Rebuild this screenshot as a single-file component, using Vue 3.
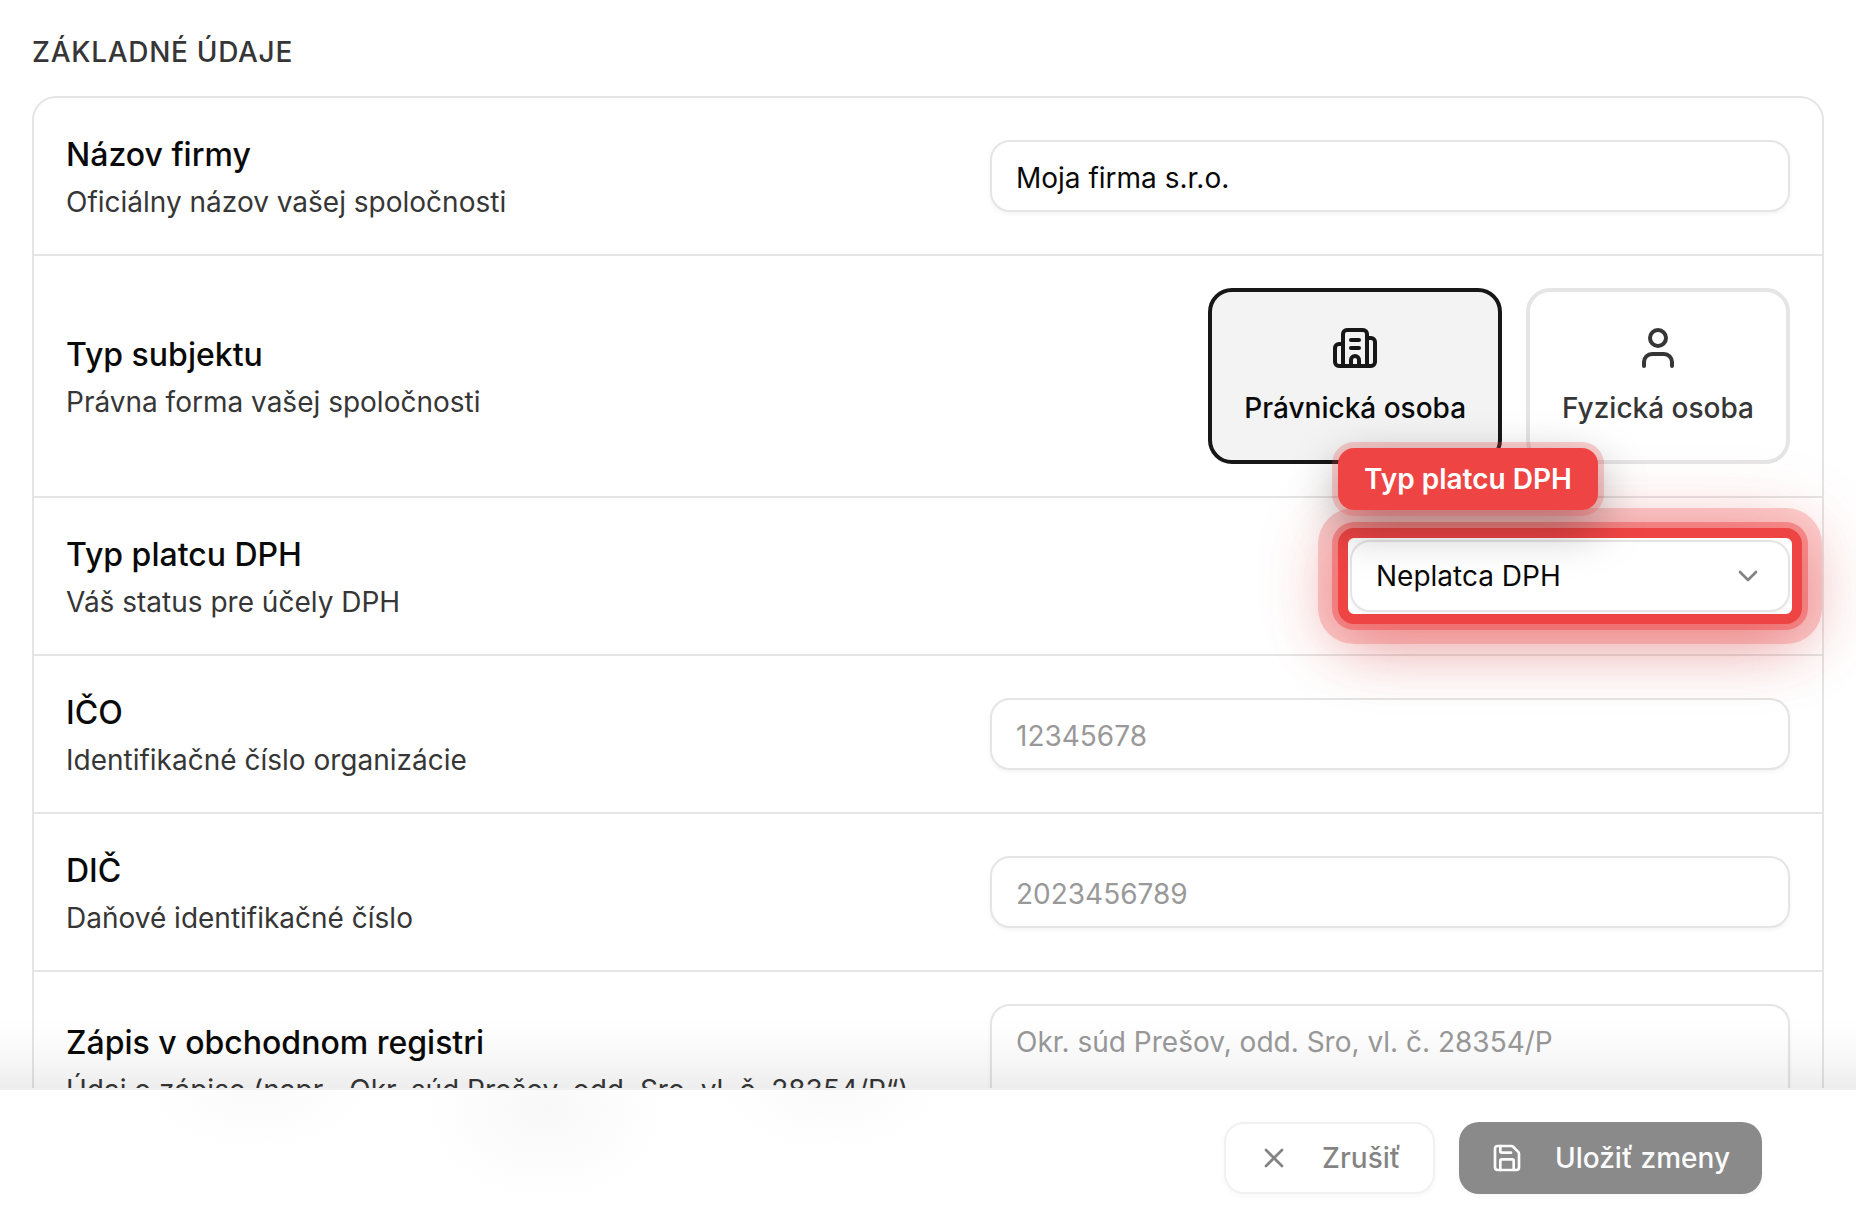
<script setup>
import { ref } from 'vue'

const companyName = ref('Moja firma s.r.o.')
const subjectType = ref('legal')
const vatPayer = ref('none')
const companyId = ref('')
const taxId = ref('')
const registry = ref('')
</script>

<template>
  <form class="page" @submit.prevent>
    <main class="content">
      <h2 class="section-title">ZÁKLADNÉ ÚDAJE</h2>

      <section class="card">
        <div class="row">
          <div class="info">
            <label class="title" for="company-name">Názov firmy</label>
            <p class="desc">Oficiálny názov vašej spoločnosti</p>
          </div>
          <input id="company-name" v-model="companyName" class="field" type="text" />
        </div>

        <div class="row">
          <div class="info">
            <span id="subject-type" class="title">Typ subjektu</span>
            <p class="desc">Právna forma vašej spoločnosti</p>
          </div>
          <div class="options" role="group" aria-labelledby="subject-type">
            <button
              type="button"
              class="option"
              :class="{ selected: subjectType === 'legal' }"
              @click="subjectType = 'legal'"
            >
              <svg class="icon-lg" viewBox="0 0 24 24" aria-hidden="true">
                <path d="M10 12h4" />
                <path d="M10 8h4" />
                <path d="M14 21v-3a2 2 0 0 0-4 0v3" />
                <path d="M6 10H4a2 2 0 0 0-2 2v7a2 2 0 0 0 2 2h16a2 2 0 0 0 2-2V9a2 2 0 0 0-2-2h-2" />
                <path d="M6 21V5a2 2 0 0 1 2-2h8a2 2 0 0 1 2 2v16" />
              </svg>
              <span>Právnická osoba</span>
            </button>
            <button
              type="button"
              class="option"
              :class="{ selected: subjectType === 'natural' }"
              @click="subjectType = 'natural'"
            >
              <svg class="icon-lg" viewBox="0 0 24 24" aria-hidden="true">
                <path d="M19 21v-2a4 4 0 0 0-4-4H9a4 4 0 0 0-4 4v2" />
                <circle cx="12" cy="7" r="4" />
              </svg>
              <span>Fyzická osoba</span>
            </button>
          </div>
        </div>

        <div class="row">
          <div class="info">
            <label class="title" for="vat-payer">Typ platcu DPH</label>
            <p class="desc">Váš status pre účely DPH</p>
          </div>
          <div class="select-wrap">
            <div class="highlight"></div>
            <select id="vat-payer" v-model="vatPayer" class="select">
              <option value="none">Neplatca DPH</option>
              <option value="payer">Platca DPH</option>
            </select>
            <svg class="icon chevron" viewBox="0 0 24 24" aria-hidden="true">
              <path d="m6 9 6 6 6-6" />
            </svg>
            <div class="callout">Typ platcu DPH</div>
          </div>
        </div>

        <div class="row">
          <div class="info">
            <label class="title" for="company-id">IČO</label>
            <p class="desc">Identifikačné číslo organizácie</p>
          </div>
          <input id="company-id" v-model="companyId" class="field" type="text" placeholder="12345678" />
        </div>

        <div class="row">
          <div class="info">
            <label class="title" for="tax-id">DIČ</label>
            <p class="desc">Daňové identifikačné číslo</p>
          </div>
          <input id="tax-id" v-model="taxId" class="field" type="text" placeholder="2023456789" />
        </div>

        <div class="row">
          <div class="info">
            <label class="title" for="registry">Zápis v obchodnom registri</label>
            <p class="desc">Údaj o zápise (napr. „Okr. súd Prešov, odd. Sro, vl. č. 28354/P“)</p>
          </div>
          <textarea
            id="registry"
            v-model="registry"
            class="field area"
            placeholder="Okr. súd Prešov, odd. Sro, vl. č. 28354/P"
          ></textarea>
        </div>
      </section>
    </main>

    <footer class="footer">
      <button type="button" class="btn cancel" disabled>
        <svg class="icon" viewBox="0 0 24 24" aria-hidden="true">
          <path d="M18 6 6 18" />
          <path d="m6 6 12 12" />
        </svg>
        <span>Zrušiť</span>
      </button>
      <button type="submit" class="btn save" disabled>
        <svg class="icon" viewBox="0 0 24 24" aria-hidden="true">
          <path d="M15.2 3a2 2 0 0 1 1.4.6l3.8 3.8a2 2 0 0 1 .6 1.4V19a2 2 0 0 1-2 2H5a2 2 0 0 1-2-2V5a2 2 0 0 1 2-2z" />
          <path d="M17 21v-7a1 1 0 0 0-1-1H8a1 1 0 0 0-1 1v7" />
          <path d="M7 3v4a1 1 0 0 0 1 1h7" />
        </svg>
        <span>Uložiť zmeny</span>
      </button>
    </footer>
  </form>
</template>

<style>
body {
  margin: 0;
  background: #fff;
}
</style>

<style scoped>
.page,
.page * {
  box-sizing: border-box;
}

.page {
  display: flex;
  flex-direction: column;
  height: 100vh;
  font-family: Inter, "Liberation Sans", sans-serif;
  font-optical-sizing: none;
  font-size: 28px;
  line-height: 40px;
  color: #0a0a0a;
  background: #fff;
}

.content {
  flex: 1;
  min-height: 0;
  overflow: hidden;
  padding: 32px;
}

.section-title {
  margin: 0 0 24px;
  font-size: 28px;
  font-weight: 500;
  line-height: 40px;
  letter-spacing: 0.025em;
  color: #363636;
}

.card {
  border: 2px solid #e5e5e5;
  border-radius: 24px;
}

.row {
  display: flex;
  align-items: center;
  justify-content: space-between;
  gap: 32px;
  padding: 32px;
}

.row + .row {
  border-top: 2px solid #e5e5e5;
}

.info {
  display: flex;
  flex-direction: column;
  gap: 2px;
}

.title {
  font-size: 32px;
  font-weight: 500;
  line-height: 50px;
}

.desc {
  margin: 0;
  color: #363636;
}

.field,
.select {
  margin: 0;
  border: 2px solid #e5e5e5;
  border-radius: 20px;
  background: #fff;
  color: #0a0a0a;
  font: inherit;
  box-shadow: 0 2px 4px rgba(0, 0, 0, 0.05);
  outline: none;
}

.field {
  flex: none;
  width: 800px;
  max-width: 50%;
  height: 72px;
  padding: 4px 24px 0;
}

.field::placeholder {
  color: #999;
  opacity: 1;
}

.area {
  display: block;
  height: 120px;
  padding: 16px 24px;
  resize: none;
}

.options {
  display: flex;
  gap: 24px;
}

.option {
  display: flex;
  flex-direction: column;
  align-items: center;
  gap: 16px;
  padding: 32px;
  border: 4px solid #e5e5e5;
  border-radius: 24px;
  background: #fff;
  color: #363636;
  font: inherit;
  font-weight: 500;
}

.option.selected {
  border-color: #171717;
  background: #f3f3f3;
  color: #0a0a0a;
}

.icon,
.icon-lg {
  flex: none;
  fill: none;
  stroke: currentColor;
  stroke-width: 2;
  stroke-linecap: round;
  stroke-linejoin: round;
}

.icon {
  width: 32px;
  height: 32px;
}

.icon-lg {
  width: 48px;
  height: 48px;
}

.option.selected .icon-lg {
  color: #171717;
}

.select-wrap {
  position: relative;
  z-index: 1;
  flex: none;
  width: 440px;
}

.select {
  position: relative;
  display: block;
  width: 100%;
  height: 72px;
  padding: 0 64px 0 24px;
  appearance: none;
}

.chevron {
  position: absolute;
  top: 20px;
  right: 26px;
  opacity: 0.5;
  pointer-events: none;
}

.highlight {
  position: absolute;
  inset: -12px;
  border: 10px solid #ef4444;
  border-radius: 16px;
  background: #fff;
  box-shadow:
    0 0 0 6px rgba(239, 68, 68, 0.45),
    0 0 0 20px rgba(239, 68, 68, 0.25),
    0 0 80px rgba(239, 68, 68, 0.25),
    0 20px 64px rgba(200, 40, 40, 0.4);
}

.callout {
  position: absolute;
  bottom: 102px;
  left: -12px;
  padding: 11px 26px;
  border-radius: 16px;
  background: #ef4444;
  color: #fff;
  font-weight: 600;
  white-space: nowrap;
  box-shadow:
    0 0 0 6px rgba(239, 68, 68, 0.25),
    0 16px 48px rgba(0, 0, 0, 0.35);
  pointer-events: none;
}

.footer {
  position: relative;
  z-index: 2;
  display: flex;
  justify-content: flex-end;
  gap: 24px;
  padding: 32px 94px 32px 32px;
  border-top: 2px solid #f0f0f0;
  background:
    radial-gradient(ellipse 110px 60px at 258px 0, #fafafa, transparent),
    radial-gradient(ellipse 120px 90px at 545px 20px, #f8f8f8, transparent),
    radial-gradient(ellipse 110px 60px at 830px 0, #fafafa, transparent),
    #fff;
}

/* Full-width shade cast upwards over the scrolled form */
.footer::before {
  content: "";
  position: absolute;
  right: 0;
  bottom: calc(100% + 2px);
  left: 0;
  height: 72px;
  background: linear-gradient(
    to top,
    rgba(0, 0, 0, 0.07),
    rgba(0, 0, 0, 0.035) 35%,
    rgba(0, 0, 0, 0.01) 70%,
    transparent
  );
  pointer-events: none;
}

.btn {
  display: flex;
  align-items: center;
  gap: 32px;
  height: 72px;
  padding: 0 32px;
  border: 0;
  border-radius: 20px;
  font: inherit;
  font-weight: 500;
  box-shadow: 0 2px 4px rgba(0, 0, 0, 0.05);
}

.btn:disabled {
  opacity: 0.5;
}

.cancel {
  border: 2px solid #e5e5e5;
  background: #fff;
  color: #0a0a0a;
}

.save {
  background: #171717;
  color: #fafafa;
}
</style>
